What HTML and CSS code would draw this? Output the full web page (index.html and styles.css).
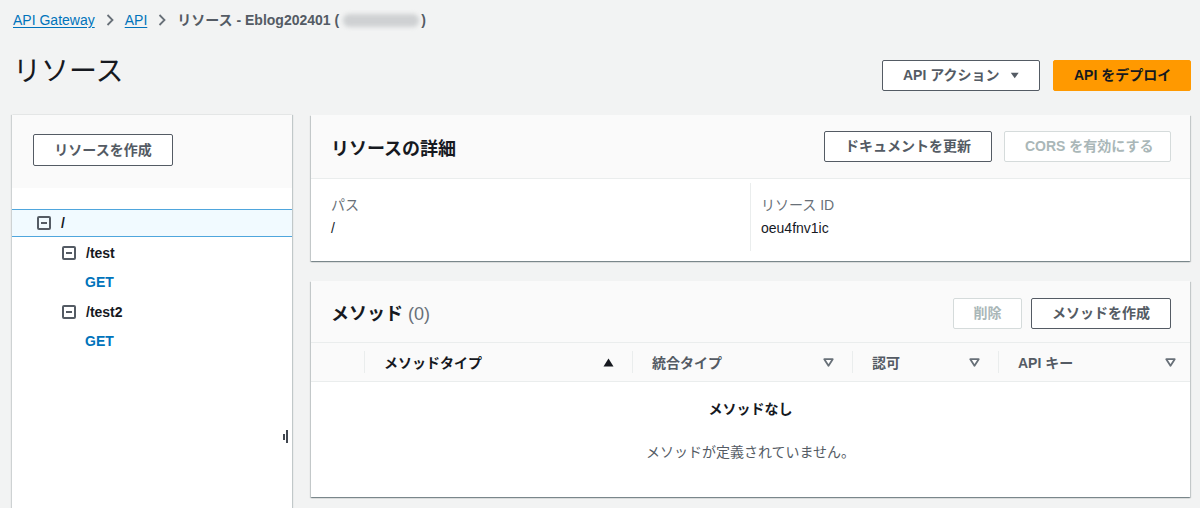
FILE: index.html
```html
<!DOCTYPE html>
<html lang="ja">
<head>
<meta charset="utf-8">
<title>リソース</title>
<link rel="stylesheet" href="styles.css">
</head>
<body>
<div class="page">
  <nav class="crumbs">
    <a class="crumb-link" href="#">API Gateway</a>
    <svg class="chev" width="10" height="14" viewBox="0 0 10 14"><path d="M2.5 2 L7.5 7 L2.5 12" fill="none" stroke="#687078" stroke-width="1.8"/></svg>
    <a class="crumb-link" href="#">API</a>
    <svg class="chev" width="10" height="14" viewBox="0 0 10 14"><path d="M2.5 2 L7.5 7 L2.5 12" fill="none" stroke="#687078" stroke-width="1.8"/></svg>
    <span class="crumb-current">リソース - Eblog202401 (<span class="blur"></span>)</span>
  </nav>

  <header class="page-head">
    <h1 class="page-title">リソース</h1>
    <div class="head-actions">
      <button class="btn btn-normal btn-actions">API アクション <svg width="12" height="9" viewBox="0 0 12 9"><path d="M1 1 H11 L6 8 Z" fill="#545b64"/></svg></button>
      <button class="btn btn-primary">API をデプロイ</button>
    </div>
  </header>

  <div class="layout">
    <aside class="tree-panel">
      <div class="tree-top">
        <button class="btn btn-normal btn-create-res">リソースを作成</button>
      </div>
      <div class="tree">
        <div class="tree-row selected lvl0">
          <span class="tree-icon"></span><span class="tree-name">/</span>
        </div>
        <div class="tree-row lvl1">
          <span class="tree-icon"></span><span class="tree-name">/test</span>
        </div>
        <div class="tree-row lvl2">
          <span class="tree-method">GET</span>
        </div>
        <div class="tree-row lvl1">
          <span class="tree-icon"></span><span class="tree-name">/test2</span>
        </div>
        <div class="tree-row lvl2">
          <span class="tree-method">GET</span>
        </div>
      </div>
      <span class="resize-handle"><i class="bar-s"></i><i class="bar-l"></i></span>
    </aside>

    <main class="main">
      <section class="panel">
        <div class="panel-head head-details">
          <h2 class="panel-title">リソースの詳細</h2>
          <div class="panel-actions">
            <button class="btn btn-normal btn-doc">ドキュメントを更新</button>
            <button class="btn btn-disabled btn-cors">CORS を有効にする</button>
          </div>
        </div>
        <div class="details">
          <div class="detail-col">
            <div class="detail-label">パス</div>
            <div class="detail-value">/</div>
          </div>
          <div class="detail-col detail-col-right">
            <div class="detail-label">リソース ID</div>
            <div class="detail-value">oeu4fnv1ic</div>
          </div>
        </div>
      </section>

      <section class="panel">
        <div class="panel-head head-methods">
          <h2 class="panel-title">メソッド <span class="count">(0)</span></h2>
          <div class="panel-actions">
            <button class="btn btn-disabled btn-del">削除</button>
            <button class="btn btn-normal btn-create-method">メソッドを作成</button>
          </div>
        </div>
        <div class="table-head">
          <div class="th th-check"></div>
          <div class="th th-type sorted">
            <span>メソッドタイプ</span>
            <svg width="11" height="9" viewBox="0 0 11 9"><path d="M0.5 8.5 L5.5 0.5 L10.5 8.5 Z" fill="#16191f"/></svg>
          </div>
          <div class="th th-int">
            <span>統合タイプ</span>
            <svg width="11" height="9" viewBox="0 0 11 9"><path d="M1.3 1.2 H9.7 L5.5 7.8 Z" fill="#fff" stroke="#687078" stroke-width="1.8" stroke-linejoin="round"/></svg>
          </div>
          <div class="th th-auth">
            <span>認可</span>
            <svg width="11" height="9" viewBox="0 0 11 9"><path d="M1.3 1.2 H9.7 L5.5 7.8 Z" fill="#fff" stroke="#687078" stroke-width="1.8" stroke-linejoin="round"/></svg>
          </div>
          <div class="th th-key">
            <span>API キー</span>
            <svg width="11" height="9" viewBox="0 0 11 9"><path d="M1.3 1.2 H9.7 L5.5 7.8 Z" fill="#fff" stroke="#687078" stroke-width="1.8" stroke-linejoin="round"/></svg>
          </div>
        </div>
        <div class="empty">
          <div class="empty-title">メソッドなし</div>
          <div class="empty-text">メソッドが定義されていません。</div>
        </div>
      </section>
    </main>
  </div>
</div>
</body>
</html>
```

FILE: styles.css
```css
* { box-sizing: border-box; }
html, body { margin: 0; padding: 0; }
body {
  background: #f2f3f3;
  font-family: "Liberation Sans", "Noto Sans CJK JP", sans-serif;
  font-size: 14px;
  color: #16191f;
  height: 508px;
  overflow: hidden;
}
.page { padding: 0 10px 0 12px; }

.crumbs {
  display: flex;
  align-items: center;
  height: 40px;
  padding-left: 1px;
  line-height: 20px;
}
.crumb-link {
  color: #0073bb;
  text-decoration: underline;
  text-underline-offset: 2px;
}
.chev { margin: 0 10px 0 10px; }
.crumb-current {
  color: #545b64;
  font-weight: bold;
  display: inline-flex;
  align-items: center;
}
.blur {
  display: inline-block;
  width: 76px;
  height: 13px;
  margin: 0 2px 0 4px;
  background: #cfd1d3;
  border-radius: 6px;
  filter: blur(2px);
}

.page-head {
  display: flex;
  align-items: flex-start;
  justify-content: space-between;
  height: 75px;
}
.page-title {
  margin: 14px 0 0 0;
  padding-left: 1px;
  font-size: 28px;
  font-weight: normal;
  line-height: 36px;
  color: #16191f;
}
.head-actions {
  display: flex;
  gap: 13px;
  margin-right: -1px;
  margin-top: 20px;
}

.btn {
  font-family: inherit;
  font-size: 14px;
  font-weight: bold;
  border-radius: 2px;
  padding: 0 20px;
  height: 31px;
  line-height: 29px;
  background: #fff;
  cursor: pointer;
  white-space: nowrap;
}
.btn-normal {
  border: 1px solid #545b64;
  color: #545b64;
}
.btn-disabled {
  border: 1px solid #d5dbdb;
  color: #aab7b8;
}
.btn-primary {
  background: #ff9900;
  border: 1px solid #ff9900;
  color: #16191f;
  width: 138px;
}
.btn-actions {
  width: 158px;
  display: inline-flex;
  align-items: center;
  justify-content: center;
  gap: 10px;
}

.layout {
  display: grid;
  grid-template-columns: 280px 1fr;
  gap: 19px;
  align-items: start;
}

.tree-panel {
  position: relative;
  background: #fff;
  height: 393px;
  box-shadow: 1px 0 1px rgba(0, 28, 36, 0.2), -1px 0 1px rgba(0, 28, 36, 0.15);
}
.tree-top {
  background: #fafafa;
  height: 73px;
  padding: 19px 0 0 21px;
}
.btn-create-res { width: 140px; height: 32px; }
.tree { padding-top: 21px; }
.tree-row {
  display: flex;
  align-items: center;
  height: 29.5px;
  font-weight: bold;
}
.tree-row.selected {
  height: 28px;
  background: #f1faff;
  border-top: 1px solid #4fa6dd;
  border-bottom: 1px solid #4fa6dd;
  margin-bottom: 1px;
}
.lvl0 { padding-left: 25px; }
.lvl1 { padding-left: 50px; }
.lvl2 { padding-left: 73px; }
.tree-icon {
  position: relative;
  width: 14px;
  height: 14px;
  border: 2px solid #545b64;
  border-radius: 2px;
  margin-right: 10px;
  flex: none;
}
.tree-icon::after {
  content: "";
  position: absolute;
  left: 2px;
  right: 2px;
  top: 4px;
  height: 2px;
  background: #545b64;
}
.tree-name { color: #16191f; }
.tree-method { color: #0073bb; }

.resize-handle {
  position: absolute;
  right: 4px;
  top: 315px;
  display: flex;
  align-items: center;
  gap: 1px;
}
.resize-handle i { display: block; background: #414750; }
.bar-s { width: 2px; height: 6px; }
.bar-l { width: 2px; height: 13px; }

.main {
  display: flex;
  flex-direction: column;
  gap: 20px;
}
.panel {
  background: #fff;
  box-shadow: 0 1px 1px 0 rgba(0, 28, 36, 0.3), 1px 1px 1px 0 rgba(0, 28, 36, 0.15), -1px 1px 1px 0 rgba(0, 28, 36, 0.15);
}
.panel-head {
  display: flex;
  align-items: center;
  justify-content: space-between;
  background: #fafafa;
  padding: 0 19px 0 20px;
  border-bottom: 1px solid #eaeded;
}
.head-details { height: 64px; }
.head-methods { height: 62px; }
.panel-title {
  margin: 0;
  font-size: 18px;
  font-weight: bold;
  color: #16191f;
}
.count { font-weight: normal; color: #687078; }
.panel-actions { display: flex; gap: 12px; }
.head-details .panel-actions { margin-top: -1px; }
.head-methods .panel-actions { margin-top: 3px; gap: 9px; }
.btn-doc { width: 168px; }
.btn-cors { width: 167px; }
.btn-del { width: 69px; padding: 0; }
.btn-create-method { width: 140px; }

.details {
  display: grid;
  grid-template-columns: 439px 1fr;
  height: 82px;
  padding-top: 4px;
}
.detail-col { padding: 11px 20px 0 20px; }
.detail-col-right {
  border-left: 1px solid #eaeded;
  padding-left: 10px;
  margin-bottom: 10px;
}
.detail-label {
  color: #687078;
  line-height: 22px;
}
.detail-value {
  line-height: 24px;
  color: #16191f;
}

.table-head {
  display: grid;
  grid-template-columns: 53px 268px 220px 146px 1fr;
  height: 39px;
  background: #fafafa;
  border-bottom: 1px solid #eaeded;
}
.th {
  display: flex;
  align-items: center;
  justify-content: space-between;
  font-weight: bold;
  color: #545b64;
  padding: 0 18px 0 20px;
  position: relative;
}
.th + .th::before {
  content: "";
  position: absolute;
  left: 0;
  top: 8px;
  bottom: 8px;
  width: 1px;
  background: #eaeded;
}
.th.sorted { color: #16191f; }
.th-key { padding-right: 14px; }

.empty {
  height: 115px;
  text-align: center;
  padding-top: 16px;
}
.empty-title {
  font-weight: bold;
  color: #16191f;
  line-height: 22px;
}
.empty-text {
  margin-top: 21px;
  color: #545b64;
  line-height: 22px;
}
```
